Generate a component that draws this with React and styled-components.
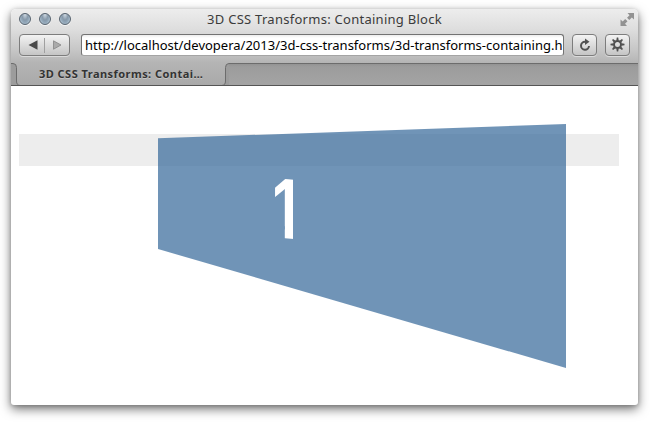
import React from "react";
import styled, { createGlobalStyle } from "styled-components";

const Global = createGlobalStyle`
  * { box-sizing: border-box; }
  body { margin: 0; background: #fff; overflow: hidden; }
`;

const Desktop = styled.div`
  width: 650px;
  height: 423px;
  padding: 9px 12px 18px 11px;
  font-family: "Noto Sans", sans-serif;
`;

const Window = styled.div`
  display: flex;
  flex-direction: column;
  width: 627px;
  height: 396px;
  border-radius: 5px 5px 3px 3px;
  background: #fff;
  box-shadow: 0 4px 11px rgba(0, 0, 0, 0.55), 0 1px 4px rgba(0, 0, 0, 0.18);
`;

const Chrome = styled.header`
  display: flex;
  flex-direction: column;
  height: 77px;
  border-radius: 5px 5px 0 0;
  overflow: hidden;
  background: linear-gradient(#ededed 0, #dedede 20px, #c5c5c5 42px, #b4b4b4 54px, #a9a9a9 77px);
`;

const TitleBar = styled.div`
  display: grid;
  grid-template-columns: 60px 1fr 60px;
  align-items: center;
  height: 20px;
  flex: none;
  padding: 0 3px 0 8px;
`;

const Lights = styled.div`
  display: flex;
  gap: 8px;
`;

const Light = styled.span`
  width: 12px;
  height: 12px;
  border: 1px solid #56626e;
  border-radius: 50%;
  background: radial-gradient(ellipse at 50% 0%, #d5dfe8 0, #8799aa 42%, #93a8ba 62%, #cbdde8 98%);
  box-shadow: 0 1px 0 rgba(255, 255, 255, 0.65);
`;

const Title = styled.h1`
  margin: 0 0 0 -5px;
  justify-self: center;
  font-size: 13px;
  line-height: 20px;
  font-weight: 400;
  color: #3b3b3b;
  white-space: nowrap;
  letter-spacing: ${(p) => p.$tracking};
`;

const Expand = styled.svg`
  justify-self: end;
  width: 15px;
  height: 15px;
  fill: #929292;
`;

const Toolbar = styled.div`
  display: flex;
  align-items: flex-start;
  height: 34px;
  flex: none;
  padding: 5px 8px 0;
`;

const Button = styled.div`
  display: flex;
  align-items: center;
  justify-content: center;
  width: ${(p) => p.$width}px;
  height: 22px;
  margin-right: ${(p) => p.$gap || 0}px;
  flex: none;
  border: 1px solid #7d7d7d;
  border-radius: 4px;
  background: linear-gradient(#f3f3f3, #c5c5c5);
  box-shadow: 0 1px 0 rgba(255, 255, 255, 0.45);
`;

const Glyph = styled.svg`
  display: block;
  flex: none;
`;

const Address = styled.div`
  width: 483px;
  height: 22px;
  margin-right: 8px;
  padding: 1px 0 0 3px;
  border: 1px solid #737373;
  border-bottom-color: #a4a4a4;
  border-radius: 3px;
  background: linear-gradient(#ededed 0, #fff 3px);
  color: #000;
  font-size: 13px;
  line-height: 18px;
  white-space: nowrap;
  overflow: hidden;
`;

const TabStrip = styled.div`
  display: flex;
  height: 23px;
  border-bottom: 1px solid #555;
`;

const StripFill = styled.div`
  flex: 1;
  border-top: 1px solid #6c6c6c;
  background: linear-gradient(#939393 0, #9c9c9c 3px, #a4a4a4 100%);
`;

const Tab = styled.div`
  display: grid;
  grid-template: 22px / 218px;
  flex: none;
  & > * { grid-area: 1 / 1; }
`;

const TabLabel = styled.span`
  padding-left: 28px;
  color: #333;
  font-size: 11px;
  font-weight: 700;
  line-height: 21px;
  white-space: nowrap;
  letter-spacing: ${(p) => p.$tracking};
  text-shadow: 0 1px 0 rgba(255, 255, 255, 0.3);
`;

const Page = styled.main`
  position: relative;
  flex: 1;
  padding: 48px 19px 0 8px;
`;

const Container = styled.div`
  height: 32px;
  background: #ededed;
`;

/* The projected face floats over its container. */
const Face = styled.div`
  position: absolute;
  left: 147px;
  top: 38px;
  width: 408px;
  height: 244px;
  background: rgba(51, 102, 153, 0.7);
  clip-path: polygon(0 14.3px, 100% 0, 100% 100%, 0 125px);
`;

/* The clip trims the foot of the numeral down to a plain stem. */
const Numeral = styled.span`
  position: absolute;
  left: 112.5px;
  top: 40.5px;
  color: #fff;
  font: 700 86px/84px "Liberation Sans", sans-serif;
  clip-path: polygon(0 0, 32px 0, 32px 100%, 20px 100%, 20px 60px, 0 60px);
  transform-origin: 0 0;
  transform: matrix(0.69, 0.06, 0, 1, 0, 0);
`;

const TabShape = () => (
  <Glyph width="218" height="22" viewBox="0 0 218 22">
    <g fill="#9c9c9c" stroke="#6c6c6c">
      <path d="M-1 .5H2Q5.500 .5 5.500 4.500V18Q5.500 22.500 9.500 22.500H-1Z" />
      <path d="M219 .5H218Q214.500 .5 214.500 4.500V18Q214.500 22.500 210.500 22.500H219Z" />
    </g>
  </Glyph>
);

export default function App() {
  return (
    <>
      <Global />
      <Desktop>
        <Window>
          <Chrome>
            <TitleBar>
              <Lights><Light /><Light /><Light /></Lights>
              <Title $tracking="0.27px">3D CSS Transforms: Containing Block</Title>
              <Expand viewBox="0 0 15 15">
                <path d="M7.500 1H14V7.500L11.800 5.500L9.300 8L7 5.700L9.500 3.200ZM.5 7.500L2.700 9.500L5.200 7L7.500 9.300L5 11.800L7 14H.5Z" />
              </Expand>
            </TitleBar>
            <Toolbar>
              <Button $width={51} $gap={11}>
                <Glyph width="49" height="20" viewBox="0 0 49 20">
                  <path d="M8.500 10L17.500 5.200V14.800Z" fill="#4a4a4a" />
                  <path d="M24.500 3V18" stroke="#a0a0a0" />
                  <path d="M33.500 5.800L41 10L33.500 14.200Z" fill="#aaa" stroke="#858585" strokeWidth=".8" />
                </Glyph>
              </Button>
              <Address>http://localhost/devopera/2013/3d-css-transforms/3d-transforms-containing.h</Address>
              <Button $width={25} $gap={8}>
                <Glyph width="14" height="14" viewBox="0 0 14 14">
                  <path d="M8.200 3.700H7A4 4 0 1 0 11 8" fill="none" stroke="#505050" strokeWidth="2" />
                  <path d="M7 .5L11.500 3.700L7 7Z" fill="#505050" />
                </Glyph>
              </Button>
              <Button $width={25}>
                <Glyph width="15" height="17" viewBox="-7.500 -7.500 15 17">
                  {[0, 45, 90, 135, 180, 225, 270, 315].map((a) => (
                    <path key={a} d="M-1.200 -4L-.7 -7H.7L1.200 -4Z" fill="#505050" transform={`rotate(${a})`} />
                  ))}
                  <circle r="3.500" fill="none" stroke="#505050" strokeWidth="2" />
                </Glyph>
              </Button>
            </Toolbar>
            <TabStrip>
              <Tab>
                <TabShape />
                <TabLabel $tracking="0.46px">3D CSS Transforms: Contai…</TabLabel>
              </Tab>
              <StripFill />
            </TabStrip>
          </Chrome>
          <Page>
            <Container />
            <Face><Numeral>1</Numeral></Face>
          </Page>
        </Window>
      </Desktop>
    </>
  );
}
